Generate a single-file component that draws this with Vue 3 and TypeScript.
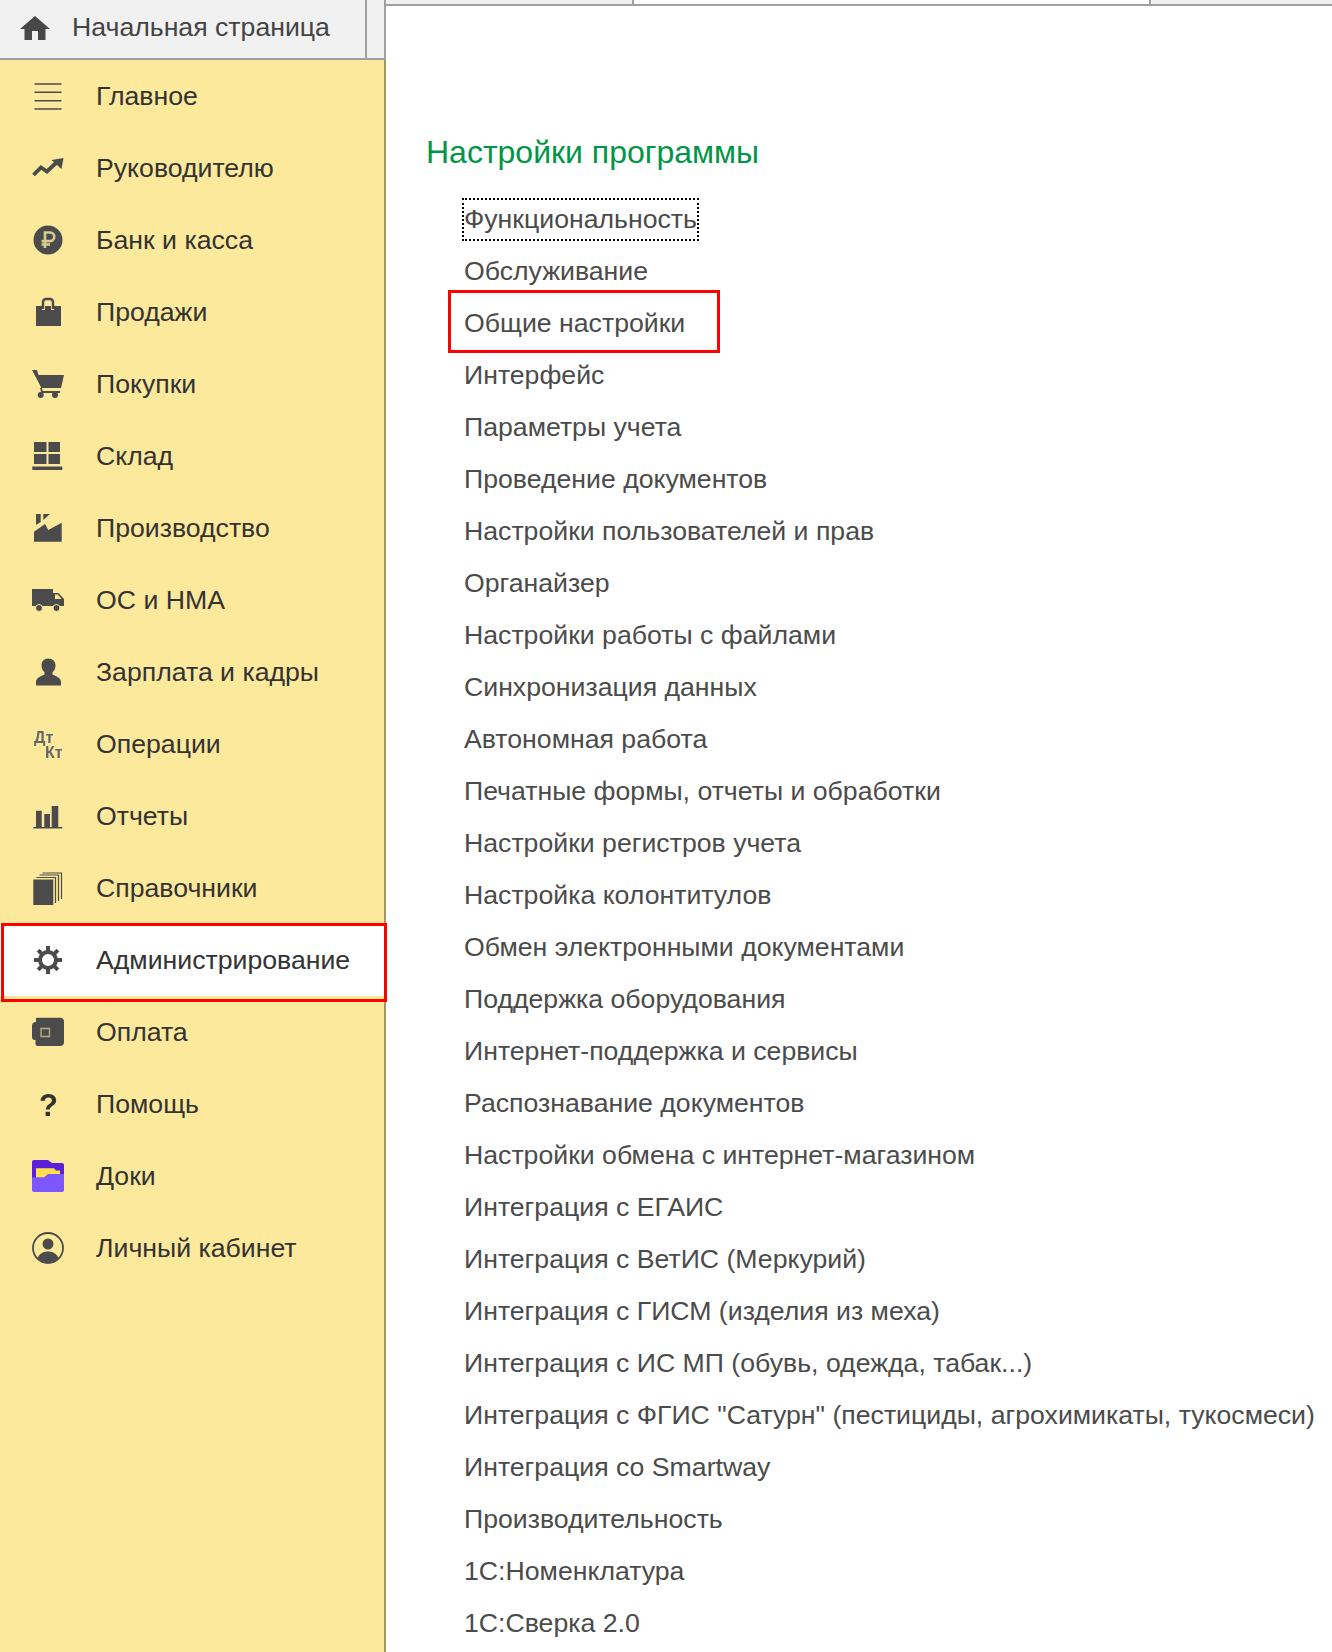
<template>
  <div class="page">
    <aside class="left">
      <div class="home-bar">
        <div class="home-tab">
          <svg class="home-icon" viewBox="0 0 30 24">
            <path d="M15 0 L30 13 L25.5 13 L25.5 24 L18 24 L18 15 L12 15 L12 24 L4.5 24 L4.5 13 L0 13 Z" fill="#484848" />
          </svg>
          <span>Начальная страница</span>
        </div>
      </div>
      <nav class="menu">
        <div
          v-for="item in menu"
          :key="item.title"
          class="menu-row"
          :class="{ active: item.active }"
        >
          <svg class="menu-icon" :class="{ soft: !item.sharp }" viewBox="0 0 32 32">
            <path
              v-for="(shape, i) in item.shapes"
              :key="i"
              :d="shape.d"
              :fill="shape.fill || 'none'"
              :stroke="shape.stroke || 'none'"
              :stroke-width="shape.width || 0"
              fill-rule="evenodd"
            />
            <text
              v-for="(label, i) in item.labels || []"
              :key="'t' + i"
              :x="label.x"
              :y="label.y"
              :font-size="label.size"
              :fill="label.fill"
              font-weight="bold"
              font-family="'Liberation Sans', Arial, sans-serif"
            >{{ label.text }}</text>
          </svg>
          <span>{{ item.title }}</span>
          <div v-if="item.active" class="mark mark-menu"></div>
        </div>
      </nav>
    </aside>

    <main class="right">
      <div class="tabs">
        <div class="tab tab-a"></div>
        <div class="tab tab-b"></div>
        <div class="tab tab-c"></div>
      </div>
      <section class="content">
        <h1>Настройки программы</h1>
        <ul class="links">
          <li v-for="link in links" :key="link" :class="{ focused: link === 'Функциональность' }">
            <span>{{ link }}</span>
            <div v-if="link === 'Общие настройки'" class="mark mark-link"></div>
          </li>
        </ul>
      </section>
    </main>
  </div>
</template>

<script setup lang="ts">
interface Shape {
  d: string
  fill?: string
  stroke?: string
  width?: number
}

interface Label {
  text: string
  x: number
  y: number
  size: number
  fill: string
}

interface MenuItem {
  title: string
  shapes: Shape[]
  labels?: Label[]
  active?: boolean
  sharp?: boolean
}

const DARK = '#4b4b4b'
const BG = '#fce99c'

const menu: MenuItem[] = [
  {
    title: 'Главное',
    sharp: true,
    shapes: [
      { d: 'M2.5 3.2h27v1.6h-27z M2.5 11.5h27v1.6h-27z M2.5 19.9h27v1.6h-27z M2.5 28.2h27v1.6h-27z', fill: DARK }
    ]
  },
  {
    title: 'Руководителю',
    shapes: [
      { d: 'M1.5 23 L9 15.5 L15 19.5 L25 10', stroke: DARK, width: 3.8 },
      { d: 'M19.5 8 L31.5 6 L29.5 17 Z', fill: DARK }
    ]
  },
  {
    title: 'Банк и касса',
    shapes: [
      { d: 'M16 1.5a14.5 14.5 0 1 0 0 29a14.5 14.5 0 1 0 0-29z', fill: DARK },
      { d: 'M13 24V8.5h5a4.3 4.3 0 0 1 0 8.6H9.5 M9.5 20.5H18', stroke: '#d8cb8c', width: 2.6 }
    ]
  },
  {
    title: 'Продажи',
    shapes: [
      { d: 'M4 10H10V14H13V10H19V14H22V10H29V30H4Z', fill: DARK },
      { d: 'M11 13V6a3 3 0 0 1 3-3h4a3 3 0 0 1 3 3V13', stroke: DARK, width: 2.4 }
    ]
  },
  {
    title: 'Покупки',
    shapes: [
      { d: 'M0 2H5L6.500 7H32L29 20H9.500Z', fill: DARK },
      { d: 'M9 20L10 24H28', stroke: DARK, width: 1.800 },
      { d: 'M5.700 27a3 3 0 1 0 6 0a3 3 0 1 0-6 0z M20 27a3 3 0 1 0 6 0a3 3 0 1 0-6 0z', fill: DARK }
    ]
  },
  {
    title: 'Склад',
    shapes: [
      {
        d: 'M2 2H14.500V12H2Z M16.500 2H28V12H16.500Z M2 14H14.500V24H2Z M16.500 14H28V24H16.500Z M0.300 26.500H30.300V30H0.300Z',
        fill: DARK
      }
    ]
  },
  {
    title: 'Производство',
    shapes: [
      { d: 'M2 29.700V19.700L13 12L16.300 18L29.700 10.700V29.700Z', fill: DARK },
      { d: 'M4 2H8.700V10L4 13Z M11.300 2H18L11.300 8Z', fill: DARK }
    ]
  },
  {
    title: 'ОС и НМА',
    shapes: [
      { d: 'M0 5H21V9H26.500L32 15V22H0Z', fill: DARK },
      { d: 'M23 10.500H26L29.500 15H23Z', fill: BG },
      {
        d: 'M3.500 24a3.500 3.500 0 1 0 7 0a3.500 3.500 0 1 0-7 0z M21 24a3.500 3.500 0 1 0 7 0a3.500 3.500 0 1 0-7 0z',
        fill: DARK,
        stroke: BG,
        width: 1
      }
    ]
  },
  {
    title: 'Зарплата и кадры',
    shapes: [
      {
        d: 'M16 2.500c-4 0-6.500 3-6.500 7c0 3 1.300 5.300 3 6.800v2.200C8 20.500 4 22 4 26v3.500h25V26c0-4-4-5.500-8.500-7.500v-2.200c1.700-1.500 3-3.800 3-6.800c0-4-2.500-7-7.500-7z',
        fill: DARK
      }
    ]
  },
  {
    title: 'Операции',
    shapes: [],
    labels: [
      { text: 'Дт', x: 2, y: 15, size: 16, fill: '#666' },
      { text: 'Кт', x: 13, y: 30, size: 16, fill: '#666' }
    ]
  },
  {
    title: 'Отчеты',
    shapes: [
      { d: 'M4 10.700H9.700V27H4Z M12.300 14H18V27H12.300Z M19.700 6H26.300V27H19.700Z M1.300 27H30.300V28.500H1.300Z', fill: DARK }
    ]
  },
  {
    title: 'Справочники',
    shapes: [
      { d: 'M1.300 7.500H21.300V33H1.300Z', fill: DARK },
      { d: 'M4.500 5.500H23.500V31 M7.500 3H26.500V29 M10.500 1H29.500V27', stroke: DARK, width: 1.200 }
    ]
  },
  {
    title: 'Администрирование',
    active: true,
    shapes: [
      { d: 'M16 8a8 8 0 1 0 0 16a8 8 0 1 0 0-16z', stroke: DARK, width: 4 },
      {
        d: 'M16 2V8 M16 24V30 M2 16H8 M24 16H30 M6.100 6.100L10.300 10.300 M21.700 21.700L25.900 25.900 M6.100 25.900L10.300 21.700 M21.700 10.300L25.900 6.100',
        stroke: DARK,
        width: 4
      }
    ]
  },
  {
    title: 'Оплата',
    shapes: [
      {
        d: 'M4 1.700H28a4 4 0 0 1 4 4V26a4 4 0 0 1-4 4H6a2.500 2.500 0 0 1-2.500-2.500V24H3a3 3 0 0 1-3-3V9a4 4 0 0 1 4-3Z',
        fill: DARK
      },
      { d: 'M9 12.500H17.500V20.500H9Z', stroke: '#b5ac7d', width: 1.400 }
    ]
  },
  {
    title: 'Помощь',
    shapes: [],
    labels: [{ text: '?', x: 7, y: 28, size: 31, fill: '#333' }]
  },
  {
    title: 'Доки',
    sharp: true,
    shapes: [
      { d: 'M2 0H16L20 3H30a2 2 0 0 1 2 2V18H0V2a2 2 0 0 1 2-2Z', fill: '#5a1fd6' },
      { d: 'M4 8.300H22L24 10.500H28V18H4Z', fill: '#ffdf50' },
      { d: 'M0 17.300H12L16 14H32V30a2 2 0 0 1-2 2H2a2 2 0 0 1-2-2Z', fill: '#7c56ff' }
    ]
  },
  {
    title: 'Личный кабинет',
    sharp: true,
    shapes: [
      { d: 'M16 1a15 15 0 1 0 0 30a15 15 0 1 0 0-30z', stroke: DARK, width: 1.800 },
      { d: 'M16 6.500a5.500 5.500 0 1 0 0 11a5.500 5.500 0 1 0 0-11z', fill: DARK },
      { d: 'M5.500 26c2-4.500 6-6.500 10.500-6.500s8.500 2 10.500 6.500a15 15 0 0 1-21 0z', fill: DARK }
    ]
  }
]

const links: string[] = [
  'Функциональность',
  'Обслуживание',
  'Общие настройки',
  'Интерфейс',
  'Параметры учета',
  'Проведение документов',
  'Настройки пользователей и прав',
  'Органайзер',
  'Настройки работы с файлами',
  'Синхронизация данных',
  'Автономная работа',
  'Печатные формы, отчеты и обработки',
  'Настройки регистров учета',
  'Настройка колонтитулов',
  'Обмен электронными документами',
  'Поддержка оборудования',
  'Интернет-поддержка и сервисы',
  'Распознавание документов',
  'Настройки обмена с интернет-магазином',
  'Интеграция с ЕГАИС',
  'Интеграция с ВетИС (Меркурий)',
  'Интеграция с ГИСМ (изделия из меха)',
  'Интеграция с ИС МП (обувь, одежда, табак...)',
  'Интеграция с ФГИС "Сатурн" (пестициды, агрохимикаты, тукосмеси)',
  'Интеграция со Smartway',
  'Производительность',
  '1С:Номенклатура',
  '1С:Сверка 2.0'
]
</script>

<style>
html,
body {
  margin: 0;
  background: #fff;
}
</style>

<style scoped>
.page {
  display: flex;
  width: 1332px;
  height: 1652px;
  overflow: hidden;
  font-family: 'Liberation Sans', Arial, sans-serif;
  background: #fff;
}

.left {
  width: 386px;
  flex: none;
  display: flex;
  flex-direction: column;
}

.home-bar {
  height: 60px;
  box-sizing: border-box;
  background: #f1f1f1;
  border-bottom: 2px solid #a0a0a0;
  border-right: 2px solid #a0a0a0;
}

.home-tab {
  width: 367px;
  height: 58px;
  box-sizing: border-box;
  border-right: 2px solid #a0a0a0;
  display: flex;
  align-items: center;
  padding: 0 0 3px 20px;
  gap: 22px;
  font-size: 26.67px;
  color: #444;
}

.home-icon {
  width: 30px;
  height: 24px;
  flex: none;
}

.menu {
  flex: 1;
  background: #fce99c;
  border-right: 2px solid #a09860;
}

.menu-row {
  position: relative;
  height: 72px;
  display: flex;
  align-items: center;
  padding-left: 32px;
  gap: 32px;
  font-size: 26.67px;
  color: #333;
}

.menu-row.active {
  background: #fff;
}

.menu-icon {
  width: 32px;
  height: 32px;
  flex: none;
  overflow: visible;
}

.menu-icon.soft {
  filter: blur(0.5px);
}

.mark {
  position: absolute;
  box-sizing: border-box;
  border: 3px solid #f00;
  pointer-events: none;
}

.mark-menu {
  left: 1px;
  top: -1px;
  width: 386px;
  height: 79px;
  z-index: 2;
}

.right {
  flex: 1;
  min-width: 0;
  display: flex;
  flex-direction: column;
}

.tabs {
  display: flex;
  height: 6px;
  flex: none;
  box-sizing: border-box;
  border-bottom: 2px solid #a0a0a0;
}

.tab-a {
  width: 246px;
  background: #f1f1f1;
  border-right: 2px solid #a0a0a0;
}

.tab-b {
  width: 515px;
  background: #fff;
  border-right: 2px solid #a0a0a0;
}

.tab-c {
  flex: 1;
  background: #f1f1f1;
}

.content {
  flex: 1;
  padding: 128px 0 0 40px;
}

h1 {
  margin: 0 0 23px;
  font-size: 32px;
  line-height: 36px;
  font-weight: normal;
  color: #009646;
}

.links {
  list-style: none;
  margin: 0;
  padding: 0 0 0 38px;
}

.links li {
  position: relative;
  height: 52px;
  display: flex;
  align-items: center;
  font-size: 26.67px;
  color: #4b4b4b;
  white-space: nowrap;
}

.links li.focused span {
  outline: 2px dotted #000;
  outline-offset: 0;
  padding: 4px 0;
}

.mark-link {
  left: -16px;
  top: -7px;
  width: 272px;
  height: 63px;
}
</style>
